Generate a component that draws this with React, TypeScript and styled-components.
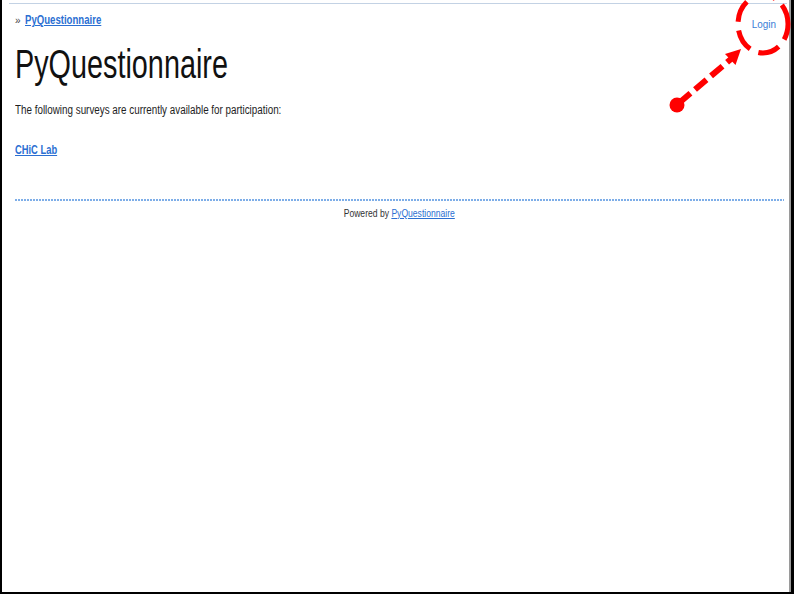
import React from "react";
import styled, { createGlobalStyle } from "styled-components";

const Global = createGlobalStyle`
  html, body { margin: 0; padding: 0; background: #fff; }
  body { font-family: "Liberation Sans", Arial, sans-serif; }
`;

const Frame = styled.div`
  position: relative;
  box-sizing: border-box;
  width: 794px;
  height: 594px;
  overflow: hidden;
  display: flex;
  flex-direction: column;
  background: #fff;
  border-left: 2px solid #000;
  border-bottom: 2px solid #000;
  border-right: 3px solid #000;
  box-shadow: inset -2px 0 0 #9a9a9a;
  color: #1e1e1e;
`;

const TopRule = styled.div`
  height: 1px;
  margin: 3px 4px 0 7px;
  background: #c3d2e4;
`;

const Content = styled.div`
  display: flex;
  flex-direction: column;
  padding: 0 9px 0 13px;
`;

const HeaderRow = styled.div`
  display: flex;
  justify-content: space-between;
  align-items: flex-start;
  margin-top: 9px;
`;

const Crumbs = styled.div`
  display: flex;
  align-items: baseline;
  font-size: 12px;
  line-height: 14px;
`;

const Raquo = styled.span`
  color: #444;
  font-size: 10px;
  margin-right: 4px;
`;

const Squeeze = styled.span<{ $sx: number; $origin?: string }>`
  display: inline-block;
  transform: scaleX(${(p) => p.$sx});
  transform-origin: ${(p) => p.$origin || "left"} center;
  white-space: nowrap;
`;

const Link = styled.a<{ $bold?: boolean }>`
  color: #2b6fd2;
  text-decoration: underline;
  font-weight: ${(p) => (p.$bold ? 700 : 400)};
  cursor: pointer;
`;

const LoginLink = styled.a`
  color: #3a7dd6;
  text-decoration: none;
  font-size: 11px;
  line-height: 14px;
  margin-top: 4px;
  margin-right: 6px;
`;

const Title = styled.h1`
  margin: 10px 0 0;
  font-size: 40px;
  line-height: 46px;
  font-weight: 400;
  color: #111;
`;

const Intro = styled.p`
  margin: 16px 0 0;
  font-size: 12px;
  line-height: 14px;
`;

const SurveyLink = styled.div`
  margin-top: 25px;
  font-size: 13px;
  line-height: 15px;
`;

const DottedRule = styled.div`
  height: 2px;
  margin: 42px -2px 0 0;
  background-image: repeating-linear-gradient(
    to right,
    #7eaee8 0 2px,
    transparent 2px 3px
  );
`;

const Footer = styled.div`
  margin-top: 6px;
  text-align: center;
  font-size: 11px;
  line-height: 13px;
  color: #333;
  padding-left: 2px;
`;

const Annotation = styled.svg`
  position: absolute;
  left: 638px;
  top: 0;
  width: 154px;
  height: 130px;
  pointer-events: none;
`;

export default function App() {
  return (
    <>
      <Global />
      <Frame>
        <TopRule />
        <Content>
          <HeaderRow>
            <Crumbs>
              <Raquo>»</Raquo>
              <Squeeze $sx={0.8}>
                <Link $bold>PyQuestionnaire</Link>
              </Squeeze>
            </Crumbs>
            <LoginLink>
              <Squeeze $sx={0.9} $origin="right">Login</Squeeze>
            </LoginLink>
          </HeaderRow>
          <Title>
            <Squeeze $sx={0.72}>PyQuestionnaire</Squeeze>
          </Title>
          <Intro>
            <Squeeze $sx={0.82}>
              The following surveys are currently available for participation:
            </Squeeze>
          </Intro>
          <SurveyLink>
            <Squeeze $sx={0.72}>
              <Link $bold>CHiC Lab</Link>
            </Squeeze>
          </SurveyLink>
          <DottedRule />
          <Footer>
            <Squeeze $sx={0.78} $origin="center">
              Powered by <Link>PyQuestionnaire</Link>
            </Squeeze>
          </Footer>
        </Content>
        <Annotation viewBox="640 0 154 130">
          <ellipse
            cx="763"
            cy="24"
            rx="25"
            ry="29"
            fill="none"
            stroke="#ff0000"
            strokeWidth="5"
            strokeDasharray="22 9"
            strokeDashoffset="6"
          />
          <circle cx="677" cy="105" r="7.5" fill="#ff0000" />
          <line
            x1="679"
            y1="103"
            x2="731"
            y2="59"
            stroke="#ff0000"
            strokeWidth="6"
            strokeDasharray="15 6"
          />
          <polygon points="741,49 735.5,65 725,54" fill="#ff0000" />
        </Annotation>
      </Frame>
    </>
  );
}
